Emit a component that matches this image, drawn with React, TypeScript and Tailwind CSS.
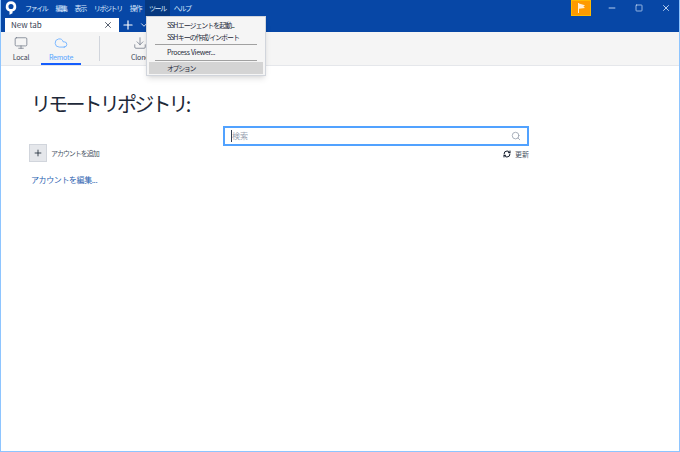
import { Monitor, Cloud, Download, Plus, X, Minus, Square, Search, RefreshCw, ChevronDown } from 'lucide-react';

const menus = ['ファイル', '編集', '表示', 'リポジトリ', '操作', 'ツール', 'ヘルプ'];

const Logo = () => (
  <svg viewBox="0 0 16 20" className="w-3 h-4 text-white" fill="currentColor">
    <path fillRule="evenodd" d="M8 1a7 7 0 0 1 2 13.7V17l-4 2v-4.3A7 7 0 0 1 8 1zm0 3.6a3.4 3.4 0 1 0 0 6.8 3.4 3.4 0 0 0 0-6.8z" />
  </svg>
);

const FlagIcon = () => (
  <svg viewBox="0 0 12 12" className="w-3 h-3 text-orange-100" fill="currentColor">
    <path d="M3 1h1v10H3zM4 1.5l6 1.7-1.6 1.3L10 6 4 6.8z" />
  </svg>
);

export default function App() {
  return (
    <div
      className="relative w-full h-screen flex flex-col bg-white overflow-hidden border-x border-b border-blue-300"
      style={{ fontFamily: '"Noto Sans CJK JP", "Noto Sans", sans-serif' }}
    >
      {/* Title bar + tab strip */}
      <div className="h-8 shrink-0 flex flex-col bg-[#0747a6]">
        <div className="h-4 flex items-start text-white">
          <div className="w-5 h-4 pl-1 flex items-center shrink-0">
            <Logo />
          </div>
          <div className="flex items-center h-4 text-[7px] tracking-[-0.2em] text-blue-100">
            {menus.map(m => (
              <span key={m} className={m === 'ツール' ? 'px-1 h-4 flex items-center bg-[#06387f]' : 'px-1 h-4 flex items-center'}>
                {m}
              </span>
            ))}
          </div>
          <div className="flex-1" />
          <div className="w-5 h-4 flex items-center justify-center bg-amber-500 border border-amber-400 mr-4">
            <FlagIcon />
          </div>
          <div className="flex items-center gap-4.5 pr-2 h-4 text-blue-100">
            <Minus className="w-2.5 h-2.5" />
            <Square className="w-2 h-2" />
            <X className="w-2.5 h-2.5" />
          </div>
        </div>
        <div className="flex items-end flex-1 pl-1">
          <div className="w-28.5 h-3.5 bg-white flex items-center justify-between px-1.5 text-[8px] text-gray-700">
            <span>New tab</span>
            <X className="w-2.5 h-2.5 text-gray-700" />
          </div>
          <div className="h-3.5 pl-0.5 flex items-center gap-1 text-white">
            <Plus className="w-3.5 h-3.5" />
            <ChevronDown className="w-2.5 h-2.5" />
          </div>
        </div>
      </div>

      {/* Toolbar */}
      <div className="h-8.5 shrink-0 flex items-stretch bg-neutral-100 border-b border-gray-200 text-[7px] tracking-tight leading-none">
        <div className="w-10 flex flex-col items-center pt-1 text-gray-700">
          <Monitor className="w-3.5 h-3.5 text-gray-500" strokeWidth={1.25} />
          <span className="mt-1">Local</span>
        </div>
        <div className="w-10 flex flex-col items-center pt-1 text-blue-400 border-b-2 border-blue-600">
          <Cloud className="w-3.5 h-3.5" strokeWidth={1.25} />
          <span className="mt-1">Remote</span>
        </div>
        <div className="w-px my-1 ml-4.5 bg-gray-300" />
        <div className="w-10 ml-5 flex flex-col items-center pt-1 text-gray-700">
          <Download className="w-3.5 h-3.5 text-gray-500" strokeWidth={1.25} />
          <span className="mt-1">Clone</span>
        </div>
      </div>

      {/* Remote repositories */}
      <div className="flex-1 px-7 pt-5">
        <h1 className="pl-0.5 mb-1 text-xl leading-9 tracking-[-0.14em] text-gray-800">リモートリポジトリ:</h1>
        <div className="flex justify-between items-start">
          <div className="pt-4">
            <div className="mt-0.5 flex items-center gap-1">
              <div className="w-4.5 h-4.5 flex items-center justify-center bg-gray-200 border border-gray-300">
                <Plus className="w-2.5 h-2.5 text-gray-800" />
              </div>
              <span className="text-[7px] tracking-[-0.15em] text-gray-600">アカウントを追加</span>
            </div>
            <div className="mt-3.5 pl-0.5 text-[8px] leading-none tracking-tighter text-[#2a62b0]">アカウントを編集...</div>
          </div>
          <div className="w-76.5 mr-30.5">
            <div className="h-5 border-2 border-blue-400 bg-white flex items-center px-1.5 text-[8px] text-gray-400">
              <span className="w-px h-3 bg-gray-700" />
              <span>検索</span>
              <Search className="ml-auto w-2.5 h-2.5 text-gray-400" />
            </div>
            <div className="flex justify-end items-center gap-1 mt-1 text-[7px] leading-none text-gray-600">
              <RefreshCw className="w-2 h-2 text-gray-900" strokeWidth={3} />
              <span>更新</span>
            </div>
          </div>
        </div>
      </div>

      {/* Tools menu */}
      <div className="absolute left-36 top-4 ml-px w-30 px-0.5 pt-0.5 pb-px bg-neutral-100 border border-gray-300 shadow-md text-[7px] tracking-[-0.15em] whitespace-nowrap text-gray-800">
        <div className="h-3 pl-4.5 flex items-center">SSH エージェントを起動...</div>
        <div className="h-3 pl-4.5 flex items-center">SSH キーの作成/インポート</div>
        <div className="h-px mx-1.5 my-px bg-neutral-400" />
        <div className="h-3 pl-4.5 flex items-center tracking-tighter">Process Viewer...</div>
        <div className="h-px mx-1.5 mt-0.5 mb-px bg-neutral-400" />
        <div className="h-3 pl-4.5 flex items-center tracking-[-0.2em] bg-neutral-300">オプション</div>
      </div>
    </div>
  );
}
